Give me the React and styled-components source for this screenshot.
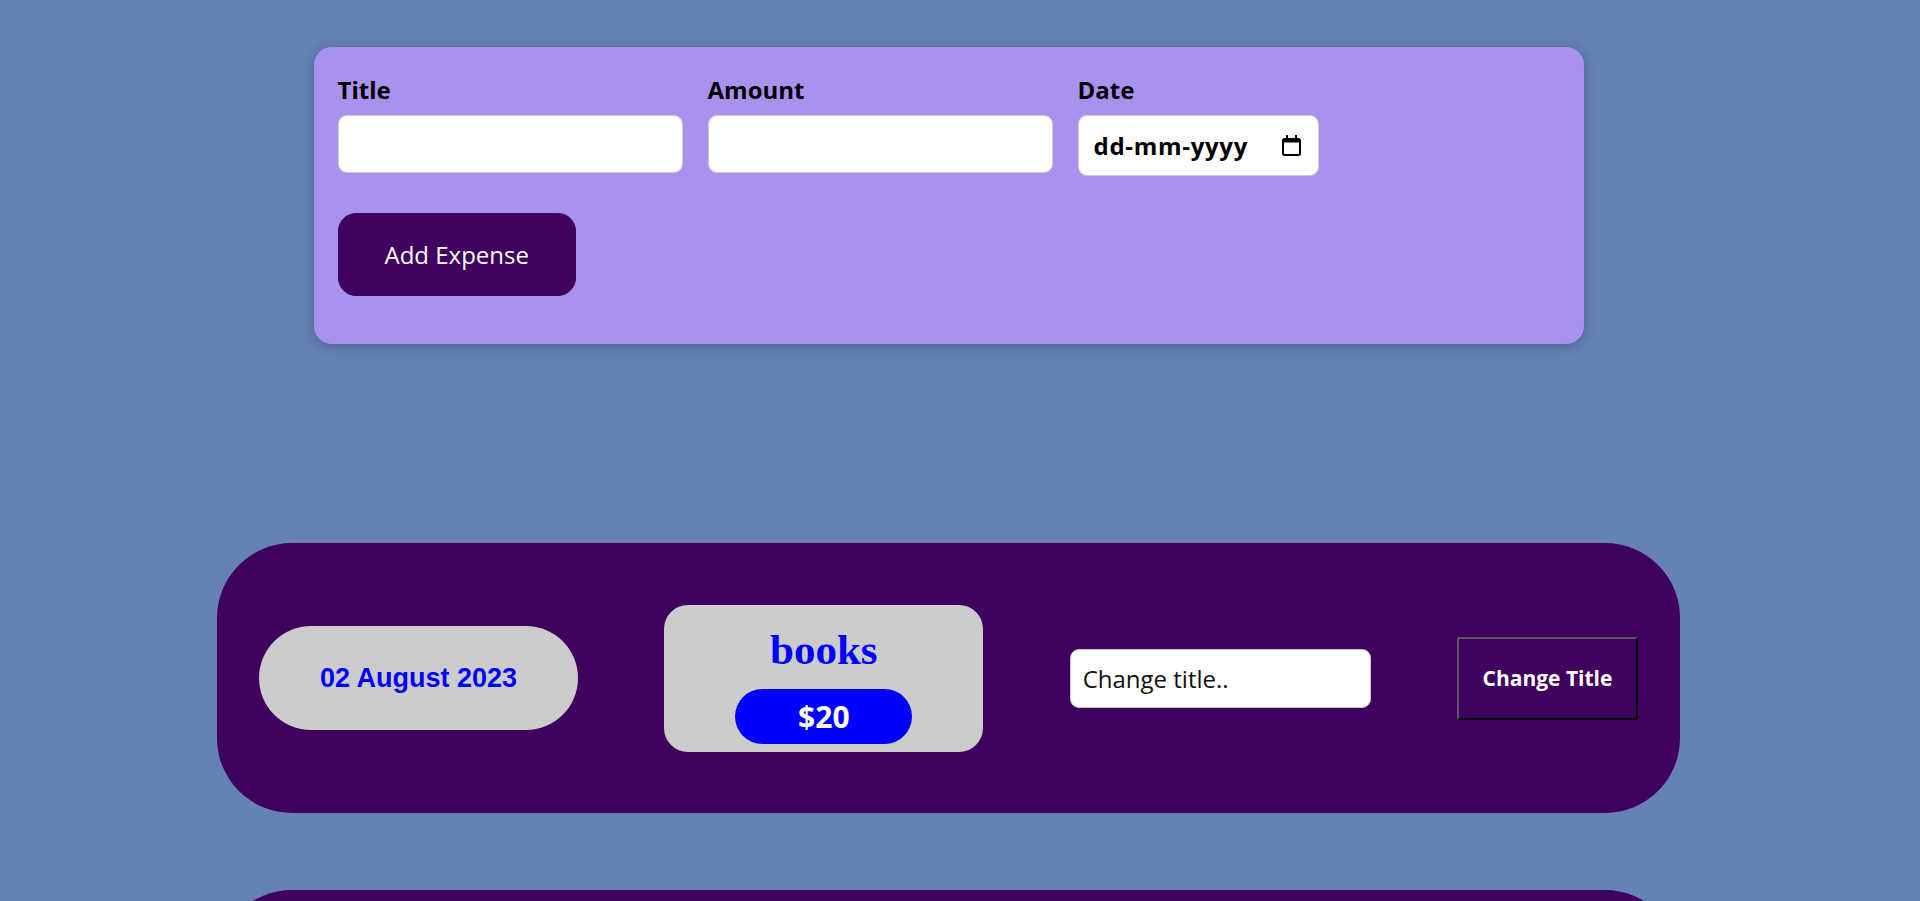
import React, { useState } from 'react';
import styled, { createGlobalStyle } from 'styled-components';

const GlobalStyle = createGlobalStyle`
  html, body {
    margin: 0;
    padding: 0;
  }
  body {
    background-color: #6482b4;
    font-family: 'Open Sans', 'Noto Sans', sans-serif;
  }
`;

const initialExpenses = [
  { id: 'e1', title: 'books', amount: 20, date: '02 August 2023' },
  { id: 'e2', title: 'pens', amount: 5, date: '05 August 2023' },
  { id: 'e3', title: 'rent', amount: 300, date: '10 August 2023' },
  { id: 'e4', title: 'food', amount: 45, date: '14 August 2023' },
];

const CalendarIcon = () => (
  <svg width="19" height="21" viewBox="0 0 19 21" aria-hidden="true">
    <path
      fill="#000"
      fillRule="evenodd"
      d="M4 0h2v3h7V0h2v3h1.5A2.5 2.5 0 0 1 19 5.5v13a2.5 2.5 0 0 1-2.5 2.5h-14A2.5 2.5 0 0 1 0 18.5v-13A2.5 2.5 0 0 1 2.5 3H4zM2 7.5v11c0 .3.2.5.5.5h14c.3 0 .5-.2.5-.5v-11z"
    />
  </svg>
);

const NewExpense = () => {
  const [title, setTitle] = useState('');
  const [amount, setAmount] = useState('');
  const [date, setDate] = useState('');

  return (
    <FormCard onSubmit={(e) => e.preventDefault()}>
      <Controls>
        <Control>
          <Label>Title</Label>
          <TextInput value={title} onChange={(e) => setTitle(e.target.value)} />
        </Control>
        <Control>
          <Label>Amount</Label>
          <TextInput value={amount} onChange={(e) => setAmount(e.target.value)} />
        </Control>
        <Control>
          <Label>Date</Label>
          <DateBox>
            <DateInput
              placeholder='dd-mm-yyyy'
              value={date}
              onChange={(e) => setDate(e.target.value)}
            />
            <CalendarIcon />
          </DateBox>
        </Control>
      </Controls>
      <Actions>
        <AddButton type='submit'>Add Expense</AddButton>
      </Actions>
    </FormCard>
  );
};

const ExpenseItem = ({ expense, onRename }) => {
  const [draft, setDraft] = useState('');

  return (
    <ItemRow>
      <DatePill>{expense.date}</DatePill>
      <Details>
        <ItemTitle>{expense.title}</ItemTitle>
        <PricePill>${expense.amount}</PricePill>
      </Details>
      <TitleInput
        placeholder='Change title..'
        value={draft}
        onChange={(e) => setDraft(e.target.value)}
      />
      <ChangeButton
        onClick={() => {
          if (draft.trim()) onRename(expense.id, draft.trim());
          setDraft('');
        }}
      >
        Change Title
      </ChangeButton>
    </ItemRow>
  );
};

const App = () => {
  const [expenses, setExpenses] = useState(initialExpenses);

  const renameExpense = (id, title) => {
    setExpenses((list) => list.map((x) => (x.id === id ? { ...x, title } : x)));
  };

  return (
    <Page>
      <GlobalStyle />
      <NewExpense />
      <ExpenseList>
        {expenses.map((expense) => (
          <ExpenseItem key={expense.id} expense={expense} onRename={renameExpense} />
        ))}
      </ExpenseList>
    </Page>
  );
};

const Page = styled.div`
  width: 1897px;
  padding: 47px 0 200px;
`;

const FormCard = styled.form`
  box-sizing: border-box;
  width: 1270px;
  margin: 0 auto;
  padding: 24px;
  background-color: #a892ee;
  border-radius: 18px;
  box-shadow: 0 2px 12px rgba(0, 0, 0, 0.25);
`;

const Controls = styled.div`
  display: flex;
  align-items: flex-start;
  gap: 25px;
  margin-bottom: 37px;
`;

const Control = styled.div`
  display: flex;
  flex-direction: column;
`;

const Label = styled.label`
  display: block;
  padding-top: 3px;
  margin-bottom: 9px;
  font-size: 24px;
  line-height: 32px;
  font-weight: 700;
  color: #000;
`;

const TextInput = styled.input`
  box-sizing: border-box;
  width: 345px;
  height: 58px;
  padding: 12px;
  font: inherit;
  font-size: 24px;
  font-weight: 700;
  border: 1px solid #ccc;
  border-radius: 9px;
  background: #fff;
  outline: none;
`;

const DateBox = styled.div`
  box-sizing: border-box;
  display: flex;
  align-items: center;
  justify-content: space-between;
  width: 241px;
  height: 61px;
  padding: 0 17px 0 15px;
  background: #fff;
  border: 1px solid #ccc;
  border-radius: 9px;
`;

const DateInput = styled.input`
  width: 168px;
  padding: 0;
  border: none;
  outline: none;
  background: transparent;
  font-family: inherit;
  font-size: 24px;
  font-weight: 700;
  letter-spacing: 0.7px;
  color: #000;

  &::placeholder {
    color: #000;
    opacity: 1;
  }
`;

const Actions = styled.div`
  margin-bottom: 24px;
`;

const AddButton = styled.button`
  box-sizing: border-box;
  height: 83px;
  padding: 0 46px;
  font-family: inherit;
  font-size: 24px;
  color: #fff;
  background-color: #40005d;
  border: 1px solid #40005d;
  border-radius: 18px;
  cursor: pointer;
`;

const ExpenseList = styled.ul`
  display: flex;
  flex-direction: column;
  gap: 77px;
  width: 1463px;
  margin: 199px auto 0;
  padding: 0;
  list-style: none;
`;

const ItemRow = styled.li`
  box-sizing: border-box;
  display: flex;
  align-items: center;
  justify-content: space-between;
  height: 270px;
  padding: 0 42px;
  background-color: #40005d;
  border-radius: 75px;
`;

const DatePill = styled.div`
  display: flex;
  align-items: center;
  justify-content: center;
  width: 319px;
  height: 104px;
  border-radius: 52px;
  background-color: #ccc;
  color: #0000ff;
  font-family: 'Liberation Sans', Arial, sans-serif;
  font-size: 27px;
  font-weight: 700;
`;

const Details = styled.div`
  box-sizing: border-box;
  display: flex;
  flex-direction: column;
  align-items: center;
  width: 319px;
  height: 147px;
  padding-top: 20px;
  border-radius: 24px;
  background-color: #ccc;
`;

const ItemTitle = styled.h2`
  margin: 0 0 15px;
  font-family: 'Liberation Serif', 'Times New Roman', serif;
  font-size: 43px;
  line-height: 49px;
  font-weight: 700;
  color: #0000ff;
`;

const PricePill = styled.div`
  display: flex;
  align-items: center;
  justify-content: center;
  width: 177px;
  height: 55px;
  border-radius: 28px;
  background-color: #0000ff;
  color: #fff;
  font-size: 30px;
  font-weight: 700;
`;

const TitleInput = styled.input`
  box-sizing: border-box;
  width: 301px;
  height: 59px;
  padding: 0 12px;
  font-family: inherit;
  font-size: 24px;
  border: 1px solid #ccc;
  border-radius: 9px;
  background: #fff;
  outline: none;

  &::placeholder {
    color: #111;
    opacity: 1;
  }
`;

const ChangeButton = styled.button`
  box-sizing: border-box;
  width: 181px;
  height: 83px;
  padding: 0;
  font-family: inherit;
  font-size: 21px;
  font-weight: 700;
  color: #fff;
  background-color: #40005d;
  border: 2px solid;
  border-color: #5d5566 #000 #000 #5d5566;
  cursor: pointer;
`;

export default App;
